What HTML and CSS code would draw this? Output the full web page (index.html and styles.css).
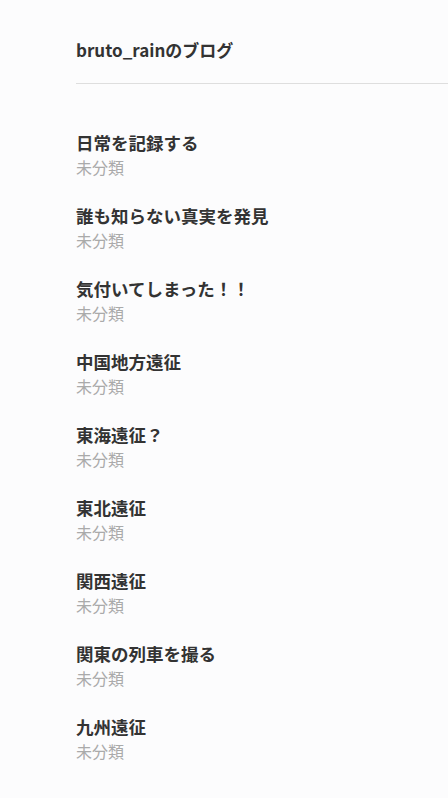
FILE: index.html
```html
<!DOCTYPE html>
<html lang="ja">
<head>
<meta charset="utf-8">
<link rel="stylesheet" href="styles.css">
</head>
<body>
<div class="page">
  <header class="header">
    <h1 class="blog-title">bruto_rainのブログ</h1>
  </header>
  <ul class="posts">
    <li class="post"><div class="post-title">日常を記録する</div><div class="post-cat">未分類</div></li>
    <li class="post"><div class="post-title">誰も知らない真実を発見</div><div class="post-cat">未分類</div></li>
    <li class="post"><div class="post-title">気付いてしまった！！</div><div class="post-cat">未分類</div></li>
    <li class="post"><div class="post-title">中国地方遠征</div><div class="post-cat">未分類</div></li>
    <li class="post"><div class="post-title">東海遠征？</div><div class="post-cat">未分類</div></li>
    <li class="post"><div class="post-title">東北遠征</div><div class="post-cat">未分類</div></li>
    <li class="post"><div class="post-title">関西遠征</div><div class="post-cat">未分類</div></li>
    <li class="post"><div class="post-title">関東の列車を撮る</div><div class="post-cat">未分類</div></li>
    <li class="post"><div class="post-title">九州遠征</div><div class="post-cat">未分類</div></li>
  </ul>
</div>
</body>
</html>
```
FILE: styles.css
```css
html, body {
  margin: 0;
  padding: 0;
  background: #fcfcfd;
}
body {
  font-family: "Noto Sans CJK JP", "Noto Sans", sans-serif;
  color: #333;
}
.page {
  padding-left: 76px;
}
.header {
  padding: 38px 0 21px;
  border-bottom: 1px solid #dedede;
}
.blog-title {
  margin: 0;
  font-size: 17px;
  line-height: 24px;
  font-weight: 700;
  color: #333;
}
.posts {
  list-style: none;
  margin: 47px 0 0;
  padding: 0;
  display: flex;
  flex-direction: column;
  gap: 25px;
}
.post-title {
  font-size: 17.5px;
  line-height: 24px;
  font-weight: 700;
  color: #333;
}
.post-cat {
  font-size: 16px;
  line-height: 24px;
  color: #aaa;
}
```
